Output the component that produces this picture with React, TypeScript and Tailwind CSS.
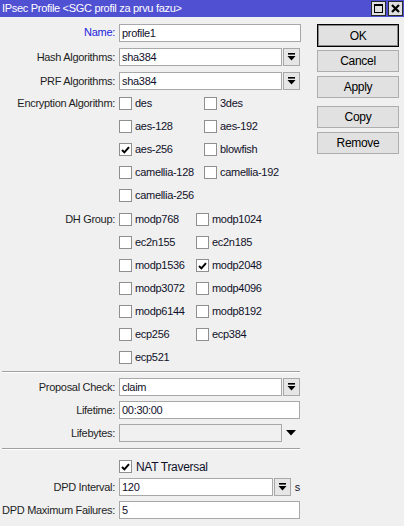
import * as React from 'react';

function DropIcon() {
  return (
    <svg width="9" height="8" viewBox="0 0 9 8">
      <rect x="1" y="0" width="7" height="1.6" fill="#000" />
      <polygon points="0.5,3 8.5,3 4.5,7.5" fill="#000" />
    </svg>
  );
}

function DropButton({ className = '' }: { className?: string }) {
  return (
    <div className={`flex h-[18px] w-[17px] items-center justify-center border border-[#a8a8a8] bg-[#e6e6e6] ${className}`}>
      <DropIcon />
    </div>
  );
}

function Field({ value, className = 'w-[182px]', disabled = false }: { value?: string; className?: string; disabled?: boolean }) {
  return (
    <div
      className={`flex h-[18px] items-center border border-[#a8a8a8] pl-[2px] text-[#10102a] ${disabled ? 'bg-[#f0f0f0]' : 'bg-white'} ${className}`}
    >
      {value}
    </div>
  );
}

function Check({ checked = false }: { checked?: boolean }) {
  return (
    <span className="flex h-[13px] w-[13px] shrink-0 items-center justify-center border border-[#8f8f8f] bg-white">
      {checked ? (
        <svg width="9" height="8" viewBox="0 0 9 8">
          <path d="M1 4 L3.4 6.4 L8 1.2" stroke="#000" strokeWidth="2" fill="none" />
        </svg>
      ) : null}
    </span>
  );
}

function Label({ text, blue = false }: { text: string; blue?: boolean }) {
  return (
    <div className={`w-[119px] shrink-0 pr-[4px] text-right whitespace-nowrap ${blue ? 'text-[#2424e0]' : 'text-[#1e1e1e]'}`}>
      {text}
    </div>
  );
}

function CheckRow({ label, items, colWidth }: { label?: string; items: [string, boolean][]; colWidth: string }) {
  return (
    <div className="flex h-[23px] items-center">
      <Label text={label ? label + ':' : ''} />
      {items.map(([name, checked]) => (
        <div key={name} className={`flex items-center gap-[3px] text-[#10102a] ${colWidth}`}>
          <Check checked={checked} />
          <span className="whitespace-nowrap">{name}</span>
        </div>
      ))}
    </div>
  );
}

function Separator() {
  return <div className="ml-[2px] h-[2px] w-[298px] border-t border-[#a0a0a0] border-b border-b-white" />;
}

function WinButton({ text, primary = false, className = '' }: { text: string; primary?: boolean; className?: string }) {
  return (
    <div
      className={`flex h-[22px] w-[82px] items-center justify-center bg-[#e1e1e1] text-[#000] ${
        primary ? 'border border-black shadow-[inset_0_0_0_1px_#8a8a8a]' : 'border border-[#adadad]'
      } ${className}`}
    >
      {text}
    </div>
  );
}

const encryption: [string, boolean][][] = [
  [['des', false], ['3des', false]],
  [['aes-128', false], ['aes-192', false]],
  [['aes-256', true], ['blowfish', false]],
  [['camellia-128', false], ['camellia-192', false]],
  [['camellia-256', false]],
];

const dhGroups: [string, boolean][][] = [
  [['modp768', false], ['modp1024', false]],
  [['ec2n155', false], ['ec2n185', false]],
  [['modp1536', false], ['modp2048', true]],
  [['modp3072', false], ['modp4096', false]],
  [['modp6144', false], ['modp8192', false]],
  [['ecp256', false], ['ecp384', false]],
  [['ecp521', false]],
];

export default function App() {
  return (
    <div className="h-[526px] w-[404px] overflow-hidden bg-[#f0f0f0] font-['Liberation_Sans',Arial,sans-serif] text-[11px] tracking-[-0.3px]">
      {/* title bar */}
      <div className="flex h-[17px] items-center bg-[#5050d2] pl-[2px] pr-[1px]">
        <div className="flex-1 whitespace-nowrap text-[11px] text-white">IPsec Profile &lt;SGC profil za prvu fazu&gt;</div>
        <div className="flex h-[15px] w-[15px] items-center justify-center border border-[#2a2a2a] bg-[#e0e0e0]">
          <div className="h-[9px] w-[9px] border border-black border-t-2" />
        </div>
        <div className="ml-[2px] flex h-[15px] w-[15px] items-center justify-center border border-[#2a2a2a] bg-[#e0e0e0]">
          <svg width="9" height="9" viewBox="0 0 9 9">
            <path d="M1 1 L8 8 M8 1 L1 8" stroke="#000" strokeWidth="2.2" />
          </svg>
        </div>
      </div>

      <div className="flex">
        {/* form */}
        <div className="flex w-[300px] flex-col pt-[7px]">
          <div className="flex h-[24px] items-start">
            <Label text="Name:" blue />
            <div className="flex h-[18px] items-center"><Field value="profile1" /></div>
          </div>
          <div className="flex h-[24px] items-start">
            <div className="flex h-[18px] items-center"><Label text="Hash Algorithms:" /></div>
            <Field value="sha384" className="w-[164px]" />
            <DropButton className="ml-[1px]" />
          </div>
          <div className="flex h-[20px] items-start">
            <div className="flex h-[18px] items-center"><Label text="PRF Algorithms:" /></div>
            <Field value="sha384" className="w-[164px]" />
            <DropButton className="ml-[1px]" />
          </div>

          {encryption.map((items, i) => (
            <CheckRow key={i} label={i === 0 ? 'Encryption Algorithm' : undefined} items={items} colWidth="w-[85px]" />
          ))}

          <div className="mt-[1px]">
            {dhGroups.map((items, i) => (
              <CheckRow key={i} label={i === 0 ? 'DH Group' : undefined} items={items} colWidth="w-[77px]" />
            ))}
          </div>

          <div className="mt-[2px]"><Separator /></div>

          <div className="mt-[5px] flex h-[23px] items-start">
            <div className="flex h-[18px] items-center"><Label text="Proposal Check:" /></div>
            <Field value="claim" className="w-[164px]" />
            <DropButton className="ml-[1px]" />
          </div>
          <div className="flex h-[23px] items-start">
            <div className="flex h-[18px] items-center"><Label text="Lifetime:" /></div>
            <Field value="00:30:00" />
          </div>
          <div className="flex h-[24px] items-start">
            <div className="flex h-[18px] items-center"><Label text="Lifebytes:" /></div>
            <Field disabled className="w-[164px]" />
            <div className="flex h-[18px] w-[18px] items-center justify-center">
              <svg width="10" height="6" viewBox="0 0 10 6">
                <polygon points="0,0 10,0 5,5.5" fill="#000" />
              </svg>
            </div>
          </div>

          <Separator />

          <div className="mt-[5px] flex h-[23px] items-center">
            <Label text="" />
            <div className="flex items-center gap-[4px] text-[12px] text-[#10102a]">
              <Check checked />
              <span>NAT Traversal</span>
            </div>
          </div>
          <div className="flex h-[23px] items-start">
            <div className="flex h-[18px] items-center"><Label text="DPD Interval:" /></div>
            <Field value="120" className="w-[155px]" />
            <DropButton className="ml-[1px]" />
            <div className="ml-[4px] flex h-[18px] items-center text-[#10102a]">s</div>
          </div>
          <div className="flex h-[23px] items-start">
            <div className="flex h-[18px] items-center"><Label text="DPD Maximum Failures:" /></div>
            <Field value="5" />
          </div>
        </div>

        {/* buttons */}
        <div className="ml-[17px] flex flex-col pt-[7px] text-[12px]">
          <WinButton text="OK" primary className="h-[23px]" />
          <WinButton text="Cancel" className="mt-[3px]" />
          <WinButton text="Apply" className="mt-[4px]" />
          <WinButton text="Copy" className="mt-[8px]" />
          <WinButton text="Remove" className="mt-[4px]" />
        </div>
      </div>
    </div>
  );
}
